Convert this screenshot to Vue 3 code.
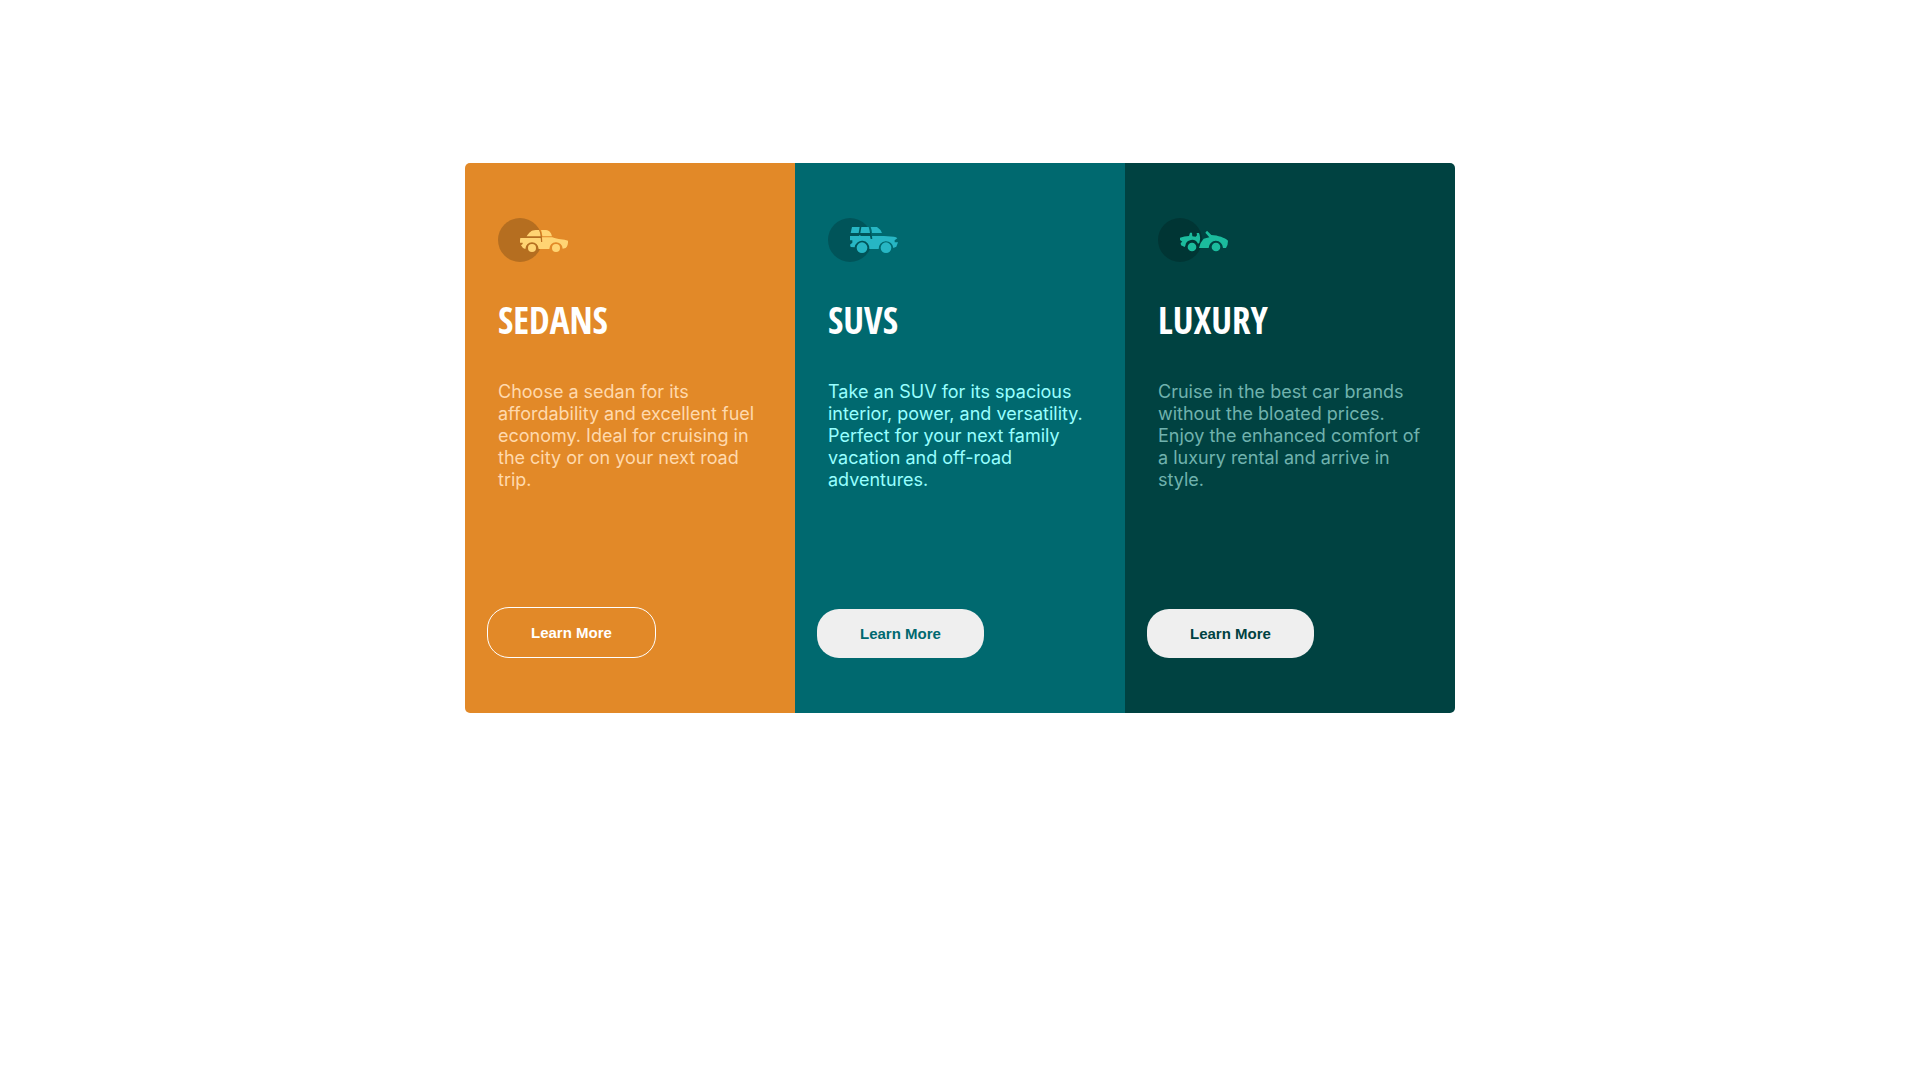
<script setup>
const cars = [
  {
    id: 'sedans',
    title: 'SEDANS',
    text: 'Choose a sedan for its affordability and excellent fuel economy. Ideal for cruising in the city or on your next road trip.',
    wheel: 12,
    wheelY: 114,
    paths: [
      'M110 79C116 69 124 60 137 60H147Q151 68 152 79Z',
      'M153 60H168C179 61 184 70 186 79H157Q156 68 153 60Z',
      'M91 84H152Q153 90 153 96H157L156 82H187C204 89 222 88 234 92Q235 106 227 114L218 116A20 20 0 1 0 178 117H146A20 20 0 1 0 106 117Q97 115 93 106L98 102V98H90V90Z',
    ],
  },
  {
    id: 'suvs',
    title: 'SUVS',
    text: 'Take an SUV for its spacious interior, power, and versatility. Perfect for your next family vacation and off-road adventures.',
    wheel: 16,
    wheelY: 113,
    paths: [
      'M96 51H119L116 69H92Z',
      'M124 51H146Q149 60 150 69H121Z',
      'M152 51H171Q181 57 186 69H156Q155 58 152 51Z',
      'M90 78H117L118 76H122L121 78H150L152 87H157L156 78H192L222 80Q229 80 232 85L224 91V97H234L229 110L220 114A22 22 0 1 0 176 117H148A22 22 0 1 0 104 112L92 111L90 104L97 98V91H90Z',
    ],
  },
  {
    id: 'luxury',
    title: 'LUXURY',
    text: 'Cruise in the best car brands without the bloated prices. Enjoy the enhanced comfort of a luxury rental and arrive in style.',
    wheel: 13,
    wheelY: 111,
    paths: [
      'M90 83Q103 78 117 78L120 68H126L127 79L137 80L141 76L140 69H147Q153 82 148 99L144 101A20 20 0 0 0 106 107L104 111L93 106L92 99L97 95L90 90Z',
      'M147 114Q150 97 161 86L178 82L166 68L171 62L184 75C204 76 225 83 234 92Q234 106 228 114H219A21 21 0 1 0 176 114Z',
    ],
  },
]
</script>

<template>
  <main class="page">
    <div class="cards">
      <article v-for="car in cars" :key="car.id" class="card" :class="car.id">
        <div class="content">
          <svg class="icon" viewBox="24 24 216 132" aria-hidden="true">
            <circle class="disc" cx="90" cy="90" r="66" />
            <g class="car">
              <path v-for="d in car.paths" :key="d" :d="d" />
              <circle cx="126" :cy="car.wheelY" :r="car.wheel" />
              <circle cx="198" :cy="car.wheelY" :r="car.wheel" />
            </g>
          </svg>
          <h2>{{ car.title }}</h2>
          <p>{{ car.text }}</p>
        </div>
        <button type="button">Learn More</button>
      </article>
    </div>
  </main>
</template>

<style>
body {
  margin: 0;
  background: #fff;
}
</style>

<style scoped>
.page {
  display: flex;
  justify-content: center;
  padding: 163px 24px 48px;
}
.cards {
  display: grid;
  grid-template-columns: repeat(3, 1fr);
  width: 100%;
  max-width: 990px;
  border-radius: 5px;
  overflow: hidden;
}
.card {
  display: flex;
  flex-direction: column;
  align-items: flex-start;
  justify-content: space-between;
  gap: 116px;
  padding: 55px 22px;
}
.content {
  padding: 0 11px;
}
.icon {
  display: block;
  width: 72px;
  height: 44px;
}
h2 {
  margin: 28px 0 31px;
  color: #fff;
  font: 700 37px/60px "Open Sans Condensed", "Liberation Sans Narrow", "Roboto Condensed", sans-serif;
}
p {
  margin: 0;
  font: 400 18px/22px Inter, "Open Sans", sans-serif;
}
button {
  padding: 16px 43px;
  border: 0;
  border-radius: 22px;
  background: #efefef;
  font: 700 15px/17px "Liberation Sans", Arial, sans-serif;
  cursor: pointer;
}
.sedans { background: #e28928; }
.sedans .disc { fill: #b56e20; }
.sedans .car { fill: #ffd473; }
.sedans p { color: #ffd9ad; }
.sedans button {
  border: 1px solid #fff;
  background: transparent;
  color: #fff;
}
.suvs { background: #00696f; }
.suvs .disc { fill: #005459; }
.suvs .car { fill: #27b6c4; }
.suvs p { color: #98ffff; }
.suvs button { color: #00696f; }
.luxury { background: #004241; }
.luxury .disc { fill: #003534; }
.luxury .car { fill: #1bbb9d; }
.luxury p { color: #70b2ae; }
.luxury button { color: #004241; }
</style>
